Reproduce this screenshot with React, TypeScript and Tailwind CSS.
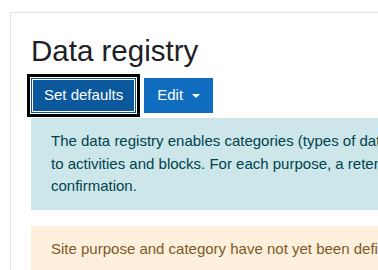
export default function App() {
  return (
    <div className="w-[378px] h-[270px] overflow-hidden bg-white font-['Liberation_Sans',Arial,sans-serif] text-[15px] leading-[22.5px] text-[#1d2125]">
      <div className="mt-[12px] ml-[10px] w-[1000px] border-l border-t border-[#dee2e6] bg-white px-[20px] pt-[20px] pb-[20px]">
        <h2 className="text-[29.5px] leading-[36px] font-normal mb-[9px]">Data registry</h2>
        <div className="flex items-center gap-[8px]">
          <button className="h-[35px] px-[12px] flex items-center border border-[#0b5190] bg-[#0c589c] text-white shadow-[inset_0_0_0_1px_#fff,0_0_0_1px_#fff,0_0_0_4px_#000]">
            Set defaults
          </button>
          <button className="h-[35px] px-[12px] flex items-center border border-[#0f6cbf] bg-[#0f6cbf] text-white">
            Edit
            <span className="ml-[9px] w-0 h-0 border-t-[4.5px] border-t-white border-x-[4.5px] border-x-transparent"></span>
          </button>
        </div>
        <div className="mt-[5px] bg-[#cce6ea] text-[#00434e] px-[20px] py-[12px] whitespace-nowrap">
          <div>
            The data registry enables categories (types of data) and purposes (the reasons for processing data) to be set for all content on the site - from users and courses down
          </div>
          <div>
            to activities and blocks. For each purpose, a retention period may be set. When a retention period has expired, the data is flagged and listed for deletion, awaiting admin
          </div>
          <div>confirmation.</div>
        </div>
        <div className="mt-[16px] bg-[#fcefdc] text-[#7d5a29] px-[20px] py-[12px] whitespace-nowrap">
          Site purpose and category have not yet been defined.
        </div>
      </div>
    </div>
  );
}
